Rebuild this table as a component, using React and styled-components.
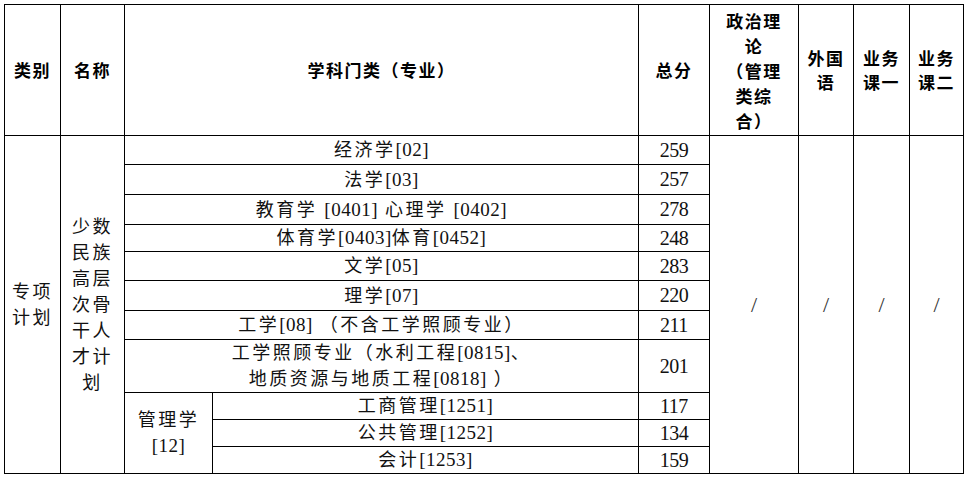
import styled, { createGlobalStyle } from "styled-components";

const GlobalStyle = createGlobalStyle`
  body { margin: 0; background: #fff; }
`;

const Page = styled.div`
  padding: 4px 0 0 4px;
`;

const Sheet = styled.table`
  border-collapse: collapse;
  table-layout: fixed;
  width: 960px;
  font-family: "Liberation Serif", "Noto Sans CJK SC", serif;
  color: #111;
`;

const Row = styled.tr`
  height: ${(props) => props.$h}px;
`;

const HeadCell = styled.th`
  border: 1px solid #000;
  padding: 0;
  font-family: "Noto Sans CJK SC", sans-serif;
  font-weight: 700;
  font-size: 17px;
  letter-spacing: 1.5px;
  line-height: ${(props) => props.$lh || 24}px;
  text-align: center;
  vertical-align: middle;
  color: #000;
`;

const Cell = styled.td`
  border: 1px solid #000;
  padding: 0;
  font-size: 18px;
  letter-spacing: 2.5px;
  line-height: 26px;
  text-align: center;
  vertical-align: middle;
  white-space: nowrap;
`;

const Code = styled.span`
  letter-spacing: 0.5px;
  font-size: 19px;
`;

const Score = styled.td`
  border: 1px solid #000;
  padding: 0;
  font-family: "Liberation Serif", serif;
  font-size: 20px;
  letter-spacing: -0.5px;
  text-align: center;
  vertical-align: middle;
`;

const Slash = styled.td`
  border: 1px solid #000;
  padding: 0;
  font-family: "Liberation Serif", serif;
  font-size: 22px;
  text-align: center;
  vertical-align: middle;
  color: #333;
`;

const subjects = [
  { h: 29, name: <>经济学<Code>[02]</Code></>, score: 259 },
  { h: 30, name: <>法学<Code>[03]</Code></>, score: 257 },
  { h: 30, name: <>教育学 <Code>[0401]</Code> 心理学 <Code>[0402]</Code></>, score: 278 },
  { h: 27, name: <>体育学<Code>[0403]</Code>体育<Code>[0452]</Code></>, score: 248 },
  { h: 29, name: <>文学<Code>[05]</Code></>, score: 283 },
  { h: 30, name: <>理学<Code>[07]</Code></>, score: 220 },
  { h: 29, name: <>工学<Code>[08]</Code> （不含工学照顾专业）</>, score: 211 },
  {
    h: 53,
    name: (
      <>
        工学照顾专业（水利工程<Code>[0815]</Code>、<br />
        地质资源与地质工程<Code>[0818]</Code> ）
      </>
    ),
    score: 201,
  },
];

const management = [
  { h: 27, name: <>工商管理<Code>[1251]</Code></>, score: 117 },
  { h: 27, name: <>公共管理<Code>[1252]</Code></>, score: 134 },
  { h: 26, name: <>会计<Code>[1253]</Code></>, score: 159 },
];

const total = subjects.length + management.length;

const App = () => {
  return (
    <Page>
      <GlobalStyle />
      <Sheet>
        <colgroup>
          <col style={{ width: 56 }} />
          <col style={{ width: 64 }} />
          <col style={{ width: 88 }} />
          <col style={{ width: 426 }} />
          <col style={{ width: 71 }} />
          <col style={{ width: 89 }} />
          <col style={{ width: 55 }} />
          <col style={{ width: 56 }} />
          <col style={{ width: 54 }} />
        </colgroup>
        <thead>
          <Row $h={131}>
            <HeadCell>类别</HeadCell>
            <HeadCell>名称</HeadCell>
            <HeadCell colSpan={2}>学科门类（专业）</HeadCell>
            <HeadCell>总分</HeadCell>
            <HeadCell $lh={25}>
              政治理<br />论<br />（管理<br />类综<br />合）
            </HeadCell>
            <HeadCell>外国<br />语</HeadCell>
            <HeadCell>业务<br />课一</HeadCell>
            <HeadCell>业务<br />课二</HeadCell>
          </Row>
        </thead>
        <tbody>
          {subjects.map((s, i) => (
            <Row key={s.score} $h={s.h}>
              {i === 0 && (
                <>
                  <Cell rowSpan={total}>专项<br />计划</Cell>
                  <Cell rowSpan={total}>
                    少数<br />民族<br />高层<br />次骨<br />干人<br />才计<br />划
                  </Cell>
                </>
              )}
              <Cell colSpan={2}>{s.name}</Cell>
              <Score>{s.score}</Score>
              {i === 0 && (
                <>
                  <Slash rowSpan={total}>/</Slash>
                  <Slash rowSpan={total}>/</Slash>
                  <Slash rowSpan={total}>/</Slash>
                  <Slash rowSpan={total}>/</Slash>
                </>
              )}
            </Row>
          ))}
          {management.map((m, i) => (
            <Row key={m.score} $h={m.h}>
              {i === 0 && (
                <Cell rowSpan={management.length}>
                  管理学<br /><Code>[12]</Code>
                </Cell>
              )}
              <Cell>{m.name}</Cell>
              <Score>{m.score}</Score>
            </Row>
          ))}
        </tbody>
      </Sheet>
    </Page>
  );
};

export default App;
